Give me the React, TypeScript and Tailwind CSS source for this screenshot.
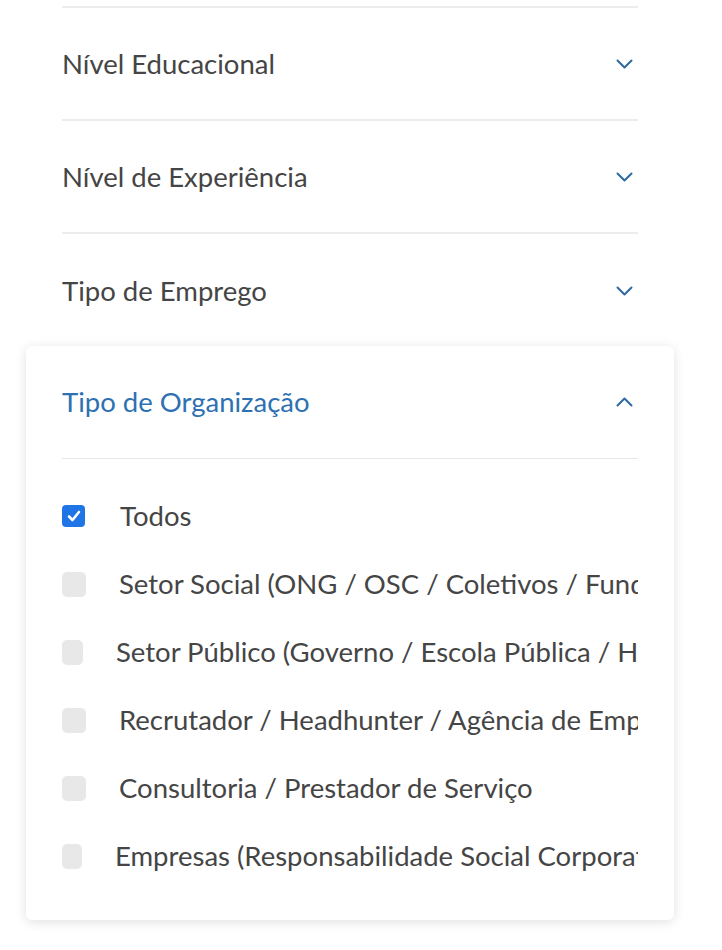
import React from "react";

const sections = ["Nível Educacional", "Nível de Experiência", "Tipo de Emprego"];

// width of the box tweaks where each label starts, as in the reference
const options = [
  { label: "Setor Social (ONG / OSC / Coletivos / Fundações / Institutos)", box: "w-[24px]" },
  { label: "Setor Público (Governo / Escola Pública / Hospital Público)", box: "w-[21px]" },
  { label: "Recrutador / Headhunter / Agência de Emprego", box: "w-[24px]" },
  { label: "Consultoria / Prestador de Serviço", box: "w-[24px]" },
  { label: "Empresas (Responsabilidade Social Corporativa)", box: "w-[20px]" },
];

function Chevron({ up = false }: { up?: boolean }) {
  return (
    <svg width="17" height="10" viewBox="0 0 17 10" fill="none" className="mr-[5px] shrink-0">
      <polyline
        points={up ? "1.5,8.5 8.5,1.5 15.5,8.5" : "1.5,1.5 8.5,8.5 15.5,1.5"}
        stroke="#2d6aa5"
        strokeWidth="2"
        strokeLinecap="round"
        strokeLinejoin="round"
      />
    </svg>
  );
}

export default function App() {
  return (
    <div className="w-[722px] h-[950px] bg-white overflow-hidden font-['Lato','Liberation_Sans',sans-serif] text-[#454545]">
      {/* Collapsed filters */}
      <div className="pl-[62px] pr-[84px] pt-[6px]">
        <div className="h-[2px] bg-[#ececec]" />
        {sections.map((s, i) => (
          <div
            key={s}
            className={`h-[113px] flex items-center justify-between ${i < 2 ? "border-b-2 border-[#ececec]" : ""}`}
          >
            <span className="text-[27.5px] leading-none">{s}</span>
            <Chevron />
          </div>
        ))}
      </div>

      {/* Open filter */}
      <div className="ml-[26px] mr-[48px] -mt-[1px] bg-white rounded-[6px] shadow-[0_2px_12px_rgba(0,0,0,0.12)] px-[36px] pb-[30px]">
        <div className="h-[113px] flex items-center justify-between border-b border-[#e6e6e6]">
          <span className="text-[27.5px] leading-none text-[#2e71b3]">Tipo de Organização</span>
          <Chevron up />
        </div>

        <div className="pt-[23px] overflow-hidden">
          <div className="h-[68px] flex items-center whitespace-nowrap">
            <div className="w-[23px] h-[22px] rounded-[4px] bg-[#1f74e6] flex items-center justify-center shrink-0">
              <svg width="14" height="12" viewBox="0 0 14 12" fill="none">
                <polyline points="2,6.5 5.5,10 12,2" stroke="white" strokeWidth="2.6" strokeLinecap="round" strokeLinejoin="round" />
              </svg>
            </div>
            <span className="ml-[35px] text-[27.5px] leading-none">Todos</span>
          </div>
          {options.map((o) => (
            <div key={o.label} className="h-[68px] flex items-center whitespace-nowrap">
              <div className={`${o.box} h-[25px] rounded-[5px] bg-[#e8e8e8] shrink-0`} />
              <span className="ml-[33px] text-[27.5px] leading-none">{o.label}</span>
            </div>
          ))}
        </div>
      </div>
    </div>
  );
}
